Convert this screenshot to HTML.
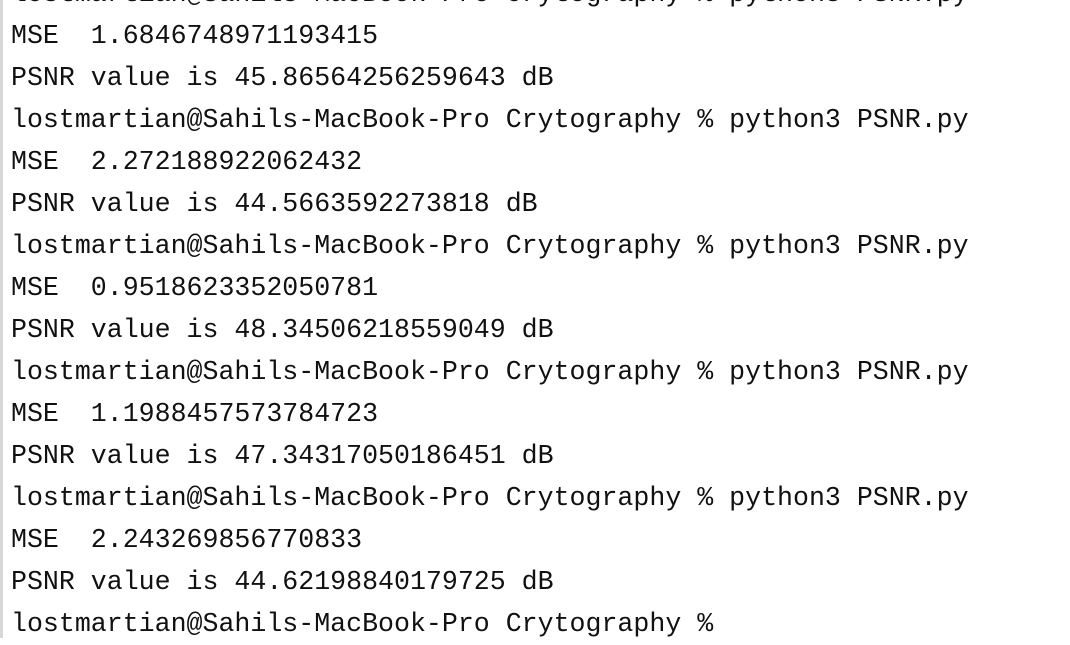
<!DOCTYPE html>
<html><head><meta charset="utf-8"><style>
html,body{margin:0;padding:0;background:#fff;width:1070px;height:638px;overflow:hidden}
.b{position:absolute;left:0;top:0;width:3px;height:638px;background:#d8d8d8}
pre{position:absolute;left:11px;top:-27px;margin:0;font-family:"Liberation Mono",monospace;font-size:26.6px;line-height:42px;color:#111;white-space:pre}
</style></head><body><div class="b"></div><pre>lostmartian@Sahils-MacBook-Pro Crytography % python3 PSNR.py
MSE  1.6846748971193415
PSNR value is 45.86564256259643 dB
lostmartian@Sahils-MacBook-Pro Crytography % python3 PSNR.py
MSE  2.272188922062432
PSNR value is 44.5663592273818 dB
lostmartian@Sahils-MacBook-Pro Crytography % python3 PSNR.py
MSE  0.9518623352050781
PSNR value is 48.34506218559049 dB
lostmartian@Sahils-MacBook-Pro Crytography % python3 PSNR.py
MSE  1.1988457573784723
PSNR value is 47.34317050186451 dB
lostmartian@Sahils-MacBook-Pro Crytography % python3 PSNR.py
MSE  2.243269856770833
PSNR value is 44.62198840179725 dB
lostmartian@Sahils-MacBook-Pro Crytography %</pre></body></html>
